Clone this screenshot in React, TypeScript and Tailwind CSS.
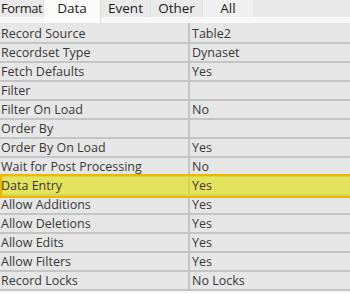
import React from "react";

const rows: [string, string][] = [
  ["Record Source", "Table2"],
  ["Recordset Type", "Dynaset"],
  ["Fetch Defaults", "Yes"],
  ["Filter", ""],
  ["Filter On Load", "No"],
  ["Order By", ""],
  ["Order By On Load", "Yes"],
  ["Wait for Post Processing", "No"],
  ["Data Entry", "Yes"],
  ["Allow Additions", "Yes"],
  ["Allow Deletions", "Yes"],
  ["Allow Edits", "Yes"],
  ["Allow Filters", "Yes"],
  ["Record Locks", "No Locks"],
];

export default function App() {
  return (
    <div
      className="w-[350px] h-[293px] overflow-hidden bg-[#f7f7f7] text-[12.5px] text-[#383838]"
      style={{ fontFamily: '"Open Sans", "Noto Sans", sans-serif' }}
    >
      <div className="flex items-start h-[23px] text-[13.5px] text-[#1a1a1a] whitespace-nowrap">
        <div className="w-[44px] h-[17px] bg-[#e9e9e9] border-r border-[#dedede] leading-[17px] pl-[1px] text-[13px] tracking-[-0.4px]">
          Format
        </div>
        <div className="w-[57px] h-[23px] bg-[#fafafa] border-r border-[#dedede] text-center leading-[16px]">
          Data
        </div>
        <div className="w-[50px] h-[17px] bg-[#e9e9e9] border-r border-[#dedede] text-center leading-[17px]">
          Event
        </div>
        <div className="w-[52px] h-[17px] bg-[#e9e9e9] border-r border-[#dedede] text-center leading-[17px]">
          Other
        </div>
        <div className="w-[50px] h-[17px] bg-[#f0f0f0] text-center leading-[17px]">All</div>
        <div className="flex-1 h-[17px] bg-[#e9e9e9]" />
      </div>
      <div className="flex flex-col">
        {rows.map(([k, v], i) => (
          <div
            key={k}
            className={`relative flex ${i === 0 ? "h-[21px] pt-[2px]" : "h-[19px]"} bg-[#e6e6e6] border-b-2 border-[#c4c4c4]`}
          >
            <div className="relative z-[2] w-[188px] pl-[1px] leading-[17px] whitespace-nowrap overflow-hidden">{k}</div>
            <div className={`w-[2px] bg-[#c4c4c4] ${i === 0 ? "-mt-[2px]" : ""}`} />
            <div className="relative z-[2] flex-1 pl-[2px] leading-[17px] whitespace-nowrap">{v}</div>
            {k === "Data Entry" && (
              <div className="absolute z-[1] left-0 right-0 -top-[3px] -bottom-[4px] border-y-[2px] border-l-[2px] border-[#eab800] bg-[rgba(227,227,0,0.6)]" />
            )}
          </div>
        ))}
      </div>
    </div>
  );
}
